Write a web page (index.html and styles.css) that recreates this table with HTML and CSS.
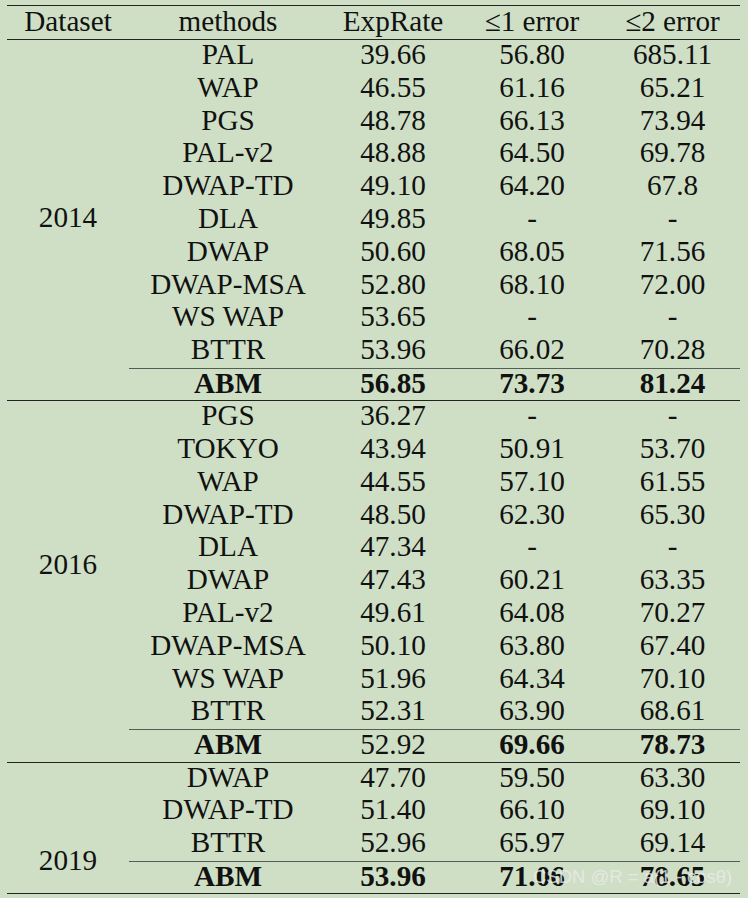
FILE: index.html
```html
<!DOCTYPE html>
<html>
<head>
<meta charset="utf-8">
<link rel="stylesheet" href="styles.css">
</head>
<body>
<div class="page">
<div class="tbl">
  <div class="row hdr">
    <div class="c">Dataset</div><div class="c">methods</div><div class="c">ExpRate</div><div class="c">≤1 error</div><div class="c">≤2 error</div>
  </div>
  <div class="grp g11">
    <div class="year y2014">2014</div>
    <div class="c">PAL</div><div class="c">39.66</div><div class="c">56.80</div><div class="c">685.11</div>
    <div class="c">WAP</div><div class="c">46.55</div><div class="c">61.16</div><div class="c">65.21</div>
    <div class="c">PGS</div><div class="c">48.78</div><div class="c">66.13</div><div class="c">73.94</div>
    <div class="c">PAL-v2</div><div class="c">48.88</div><div class="c">64.50</div><div class="c">69.78</div>
    <div class="c">DWAP-TD</div><div class="c">49.10</div><div class="c">64.20</div><div class="c">67.8</div>
    <div class="c">DLA</div><div class="c">49.85</div><div class="c">-</div><div class="c">-</div>
    <div class="c">DWAP</div><div class="c">50.60</div><div class="c">68.05</div><div class="c">71.56</div>
    <div class="c">DWAP-MSA</div><div class="c">52.80</div><div class="c">68.10</div><div class="c">72.00</div>
    <div class="c">WS WAP</div><div class="c">53.65</div><div class="c">-</div><div class="c">-</div>
    <div class="c">BTTR</div><div class="c">53.96</div><div class="c">66.02</div><div class="c">70.28</div>
    <div class="c best b">ABM</div><div class="c best b">56.85</div><div class="c best b">73.73</div><div class="c best b">81.24</div>
  </div>
  <div class="grp g11">
    <div class="year y2016">2016</div>
    <div class="c">PGS</div><div class="c">36.27</div><div class="c">-</div><div class="c">-</div>
    <div class="c">TOKYO</div><div class="c">43.94</div><div class="c">50.91</div><div class="c">53.70</div>
    <div class="c">WAP</div><div class="c">44.55</div><div class="c">57.10</div><div class="c">61.55</div>
    <div class="c">DWAP-TD</div><div class="c">48.50</div><div class="c">62.30</div><div class="c">65.30</div>
    <div class="c">DLA</div><div class="c">47.34</div><div class="c">-</div><div class="c">-</div>
    <div class="c">DWAP</div><div class="c">47.43</div><div class="c">60.21</div><div class="c">63.35</div>
    <div class="c">PAL-v2</div><div class="c">49.61</div><div class="c">64.08</div><div class="c">70.27</div>
    <div class="c">DWAP-MSA</div><div class="c">50.10</div><div class="c">63.80</div><div class="c">67.40</div>
    <div class="c">WS WAP</div><div class="c">51.96</div><div class="c">64.34</div><div class="c">70.10</div>
    <div class="c">BTTR</div><div class="c">52.31</div><div class="c">63.90</div><div class="c">68.61</div>
    <div class="c best b">ABM</div><div class="c best">52.92</div><div class="c best b">69.66</div><div class="c best b">78.73</div>
  </div>
  <div class="grp g4">
    <div class="year y2019">2019</div>
    <div class="c">DWAP</div><div class="c">47.70</div><div class="c">59.50</div><div class="c">63.30</div>
    <div class="c">DWAP-TD</div><div class="c">51.40</div><div class="c">66.10</div><div class="c">69.10</div>
    <div class="c">BTTR</div><div class="c">52.96</div><div class="c">65.97</div><div class="c">69.14</div>
    <div class="c best b">ABM</div><div class="c best b">53.96</div><div class="c best b">71.06</div><div class="c best b">78.65</div>
  </div>
</div>
<div class="watermark">CSDN @R = a(1 - cosθ)</div>
</div>
</body>
</html>
```

FILE: styles.css
```css
html, body {
  margin: 0;
  padding: 0;
  background: #cfdfc5;
}
body {
  width: 748px;
  height: 898px;
  overflow: hidden;
}
.page {
  position: relative;
  padding: 5px 0 0 7px;
}
.tbl {
  width: 733px;
  font-family: "Liberation Serif", "Times New Roman", Times, serif;
  font-size: 29.2px;
  color: #111;
  border-top: 1.5px solid #222;
  border-bottom: 1.5px solid #222;
}
.hdr, .grp {
  display: grid;
  grid-template-columns: 122px 198px 132px 146px 135px;
}
.hdr {
  border-bottom: 1.5px solid #222;
}
.hdr .c {
  line-height: 30px;
  padding-bottom: 3px;
}
.grp + .grp {
  border-top: 1.5px solid #222;
}
.c {
  font-family: "Liberation Serif", "Times New Roman", Times, serif;
  text-align: center;
  white-space: nowrap;
  line-height: 28.5px;
  padding-bottom: 4.3px;
}
.year {
  grid-column: 1;
  text-align: center;
  line-height: 28.5px;
  font-family: "Liberation Serif", "Times New Roman", Times, serif;
}
.g11 .year { grid-row: 1 / span 11; }
.g4 .year { grid-row: 1 / span 4; }
.y2014 { padding-top: 163px; }
.y2016 { padding-top: 149px; }
.y2019 { padding-top: 83px; }
.best {
  border-top: 1.5px solid #555b55;
  padding-bottom: 2.8px;
}
.b {
  font-weight: bold;
}
.watermark {
  position: absolute;
  left: 533px;
  top: 866px;
  font-family: "Liberation Sans", Arial, sans-serif;
  font-size: 18.5px;
  color: rgba(235, 235, 235, 0.8);
  white-space: nowrap;
}
```
